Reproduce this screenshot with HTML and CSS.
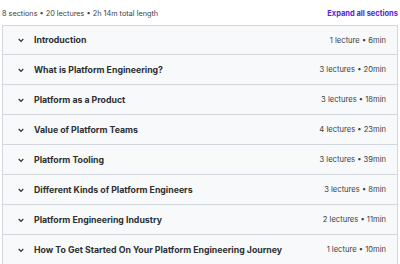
FILE: index.html
```html
<!DOCTYPE html>
<html>
<head>
<meta charset="utf-8">
<link rel="stylesheet" href="styles.css">
</head>
<body>
<div class="page">
  <div class="summary">
    <span class="stats">8 sections • 20 lectures • 2h 14m total length</span>
    <button class="expand">Expand all sections</button>
  </div>
  <div class="sections">
    <div class="row"><span class="chev"><svg width="8" height="8" viewBox="0 0 8 8"><path d="M1.7 3 L4 5.3 L6.3 3" fill="none" stroke="#2d2f31" stroke-width="1.2"/></svg></span><span class="title">Introduction</span><span class="meta">1 lecture • 6min</span></div>
    <div class="row"><span class="chev"><svg width="8" height="8" viewBox="0 0 8 8"><path d="M1.7 3 L4 5.3 L6.3 3" fill="none" stroke="#2d2f31" stroke-width="1.2"/></svg></span><span class="title">What is Platform Engineering?</span><span class="meta">3 lectures • 20min</span></div>
    <div class="row"><span class="chev"><svg width="8" height="8" viewBox="0 0 8 8"><path d="M1.7 3 L4 5.3 L6.3 3" fill="none" stroke="#2d2f31" stroke-width="1.2"/></svg></span><span class="title">Platform as a Product</span><span class="meta">3 lectures • 18min</span></div>
    <div class="row"><span class="chev"><svg width="8" height="8" viewBox="0 0 8 8"><path d="M1.7 3 L4 5.3 L6.3 3" fill="none" stroke="#2d2f31" stroke-width="1.2"/></svg></span><span class="title">Value of Platform Teams</span><span class="meta">4 lectures • 23min</span></div>
    <div class="row"><span class="chev"><svg width="8" height="8" viewBox="0 0 8 8"><path d="M1.7 3 L4 5.3 L6.3 3" fill="none" stroke="#2d2f31" stroke-width="1.2"/></svg></span><span class="title">Platform Tooling</span><span class="meta">3 lectures • 39min</span></div>
    <div class="row"><span class="chev"><svg width="8" height="8" viewBox="0 0 8 8"><path d="M1.7 3 L4 5.3 L6.3 3" fill="none" stroke="#2d2f31" stroke-width="1.2"/></svg></span><span class="title">Different Kinds of Platform Engineers</span><span class="meta">3 lectures • 8min</span></div>
    <div class="row"><span class="chev"><svg width="8" height="8" viewBox="0 0 8 8"><path d="M1.7 3 L4 5.3 L6.3 3" fill="none" stroke="#2d2f31" stroke-width="1.2"/></svg></span><span class="title">Platform Engineering Industry</span><span class="meta">2 lectures • 11min</span></div>
    <div class="row"><span class="chev"><svg width="8" height="8" viewBox="0 0 8 8"><path d="M1.7 3 L4 5.3 L6.3 3" fill="none" stroke="#2d2f31" stroke-width="1.2"/></svg></span><span class="title">How To Get Started On Your Platform Engineering Journey</span><span class="meta">1 lecture • 10min</span></div>
  </div>
</div>
</body>
</html>
```
FILE: styles.css
```css
html, body { margin: 0; padding: 0; background: #fff; }
body { font-family: Inter, "Noto Sans", sans-serif; color: #2d2f31; overflow: hidden; }
.page { padding: 0 2px; width: 396px; }
.summary { height: 25px; display: flex; align-items: center; justify-content: space-between; padding-top: 2px; box-sizing: border-box; }
.stats { font-size: 7.3px; color: #3e4143; }
.expand { border: 0; background: none; padding: 0; font-family: inherit; font-size: 7.5px; font-weight: 700; color: #5624d0; }
.sections { border: 1px solid #d1d7dc; border-bottom: 0; }
.row { height: 30px; box-sizing: border-box; display: flex; align-items: center; background: #f7f9fa; border-bottom: 1px solid #d1d7dc; padding: 0 11px 0 14px; }
.row:first-child { height: 29px; }
.chev { width: 8px; height: 8px; display: flex; margin-right: 9px; }
.title { font-size: 8.75px; font-weight: 700; flex: 1; }
.meta { font-size: 7.6px; color: #3e4143; }
```
